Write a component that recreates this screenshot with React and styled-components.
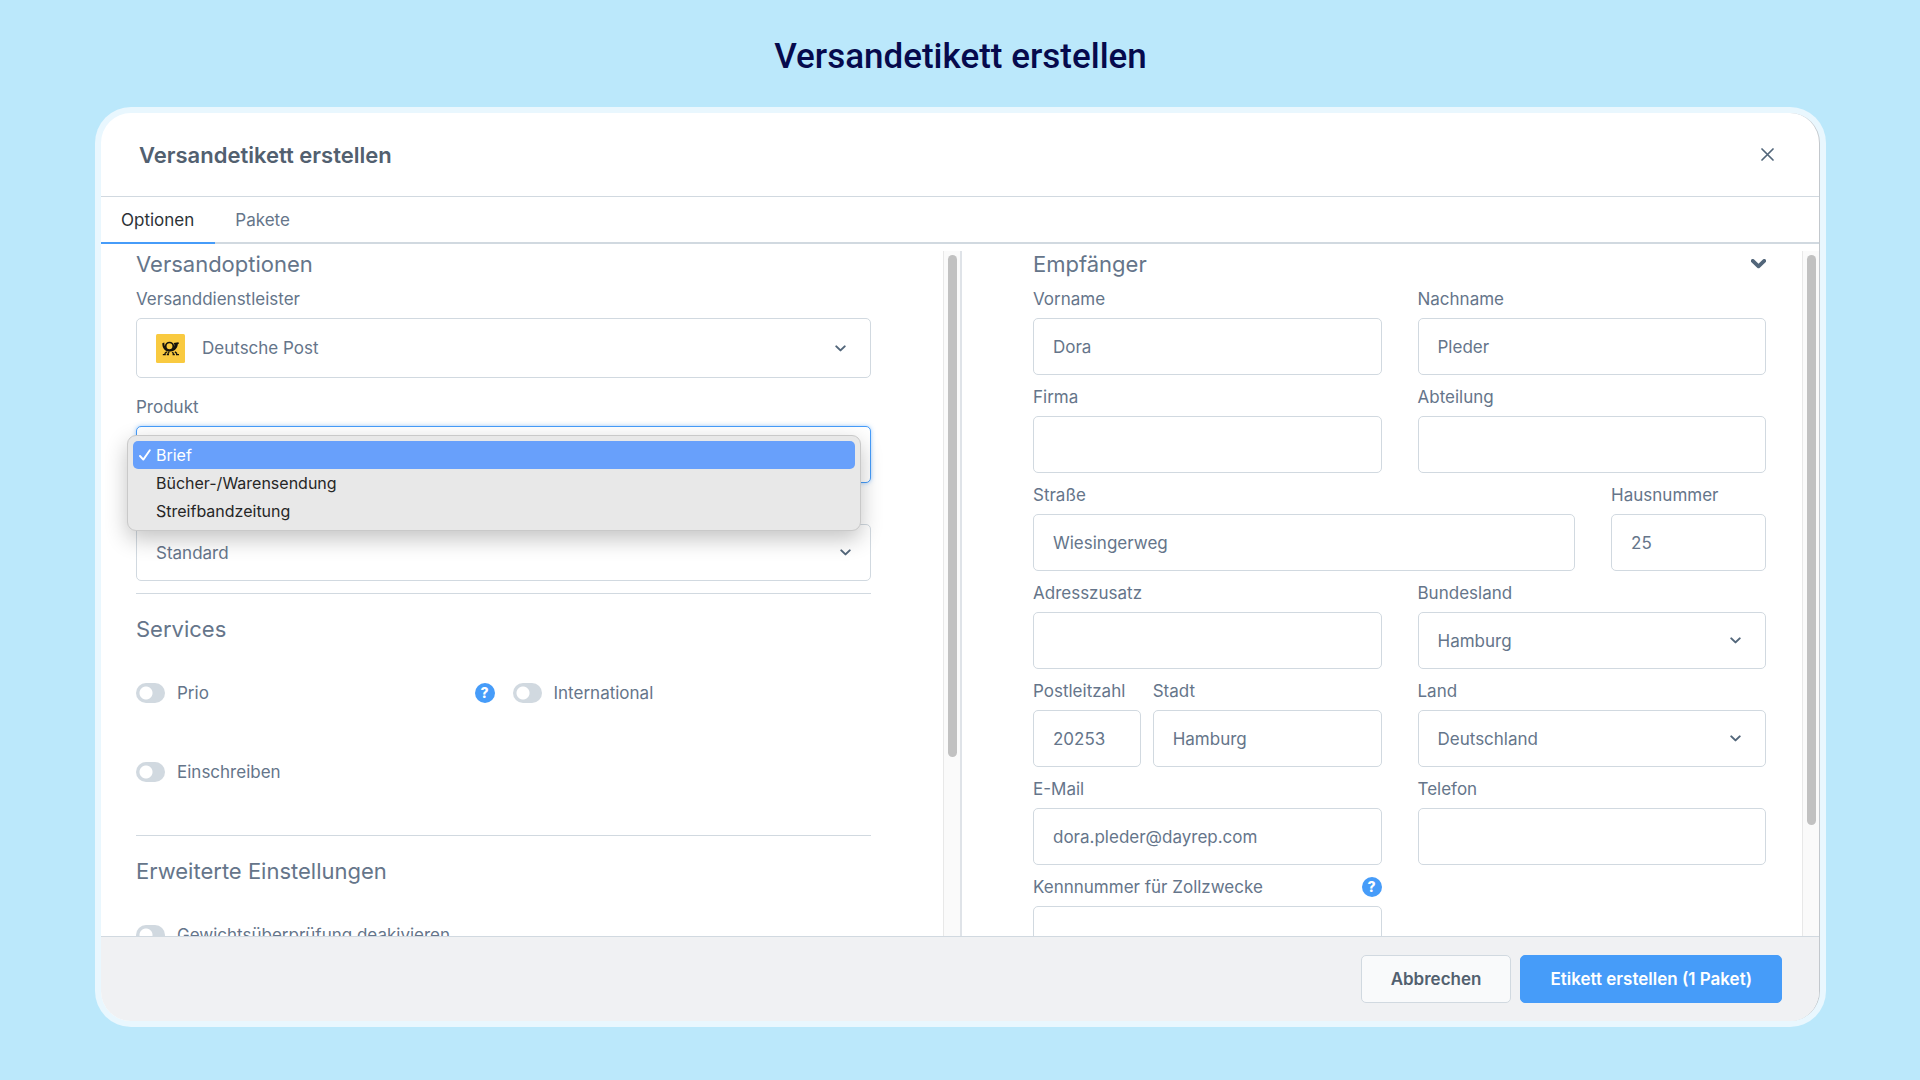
import React from "react";
import styled, { createGlobalStyle, css } from "styled-components";

const color = {
  sky: "#bbe8fb",
  navy: "#060a4d",
  text: "#65758a",
  strong: "#52606f",
  icon: "#52667a",
  line: "#d1d9e0",
  blue: "#469cf9",
};

const GlobalStyle = createGlobalStyle`
  *, *::before, *::after { box-sizing: border-box; }
  body { margin: 0; background: ${color.sky}; }
  button, input, select { font: inherit; color: inherit; }
  h1, h2, h3, ul { margin: 0; padding: 0; }
`;

const Page = styled.div`
  display: flex;
  flex-direction: column;
  height: 100vh;
  padding: 34px 94px 53px 95px;
  font-family: Inter, "Liberation Sans", sans-serif;
  font-size: 17px;
  line-height: 20px;
  color: ${color.text};
`;

const PageTitle = styled.h1`
  margin-bottom: 27px;
  font-family: Roboto, sans-serif;
  font-size: 35px;
  line-height: 46px;
  font-weight: 500;
  text-align: center;
  color: ${color.navy};
`;

const Frame = styled.div`
  display: flex;
  flex: 1;
  min-height: 0;
  padding: 6px;
  border-radius: 36px;
  background: #e9f7fe;
`;

const Dialog = styled.section`
  display: flex;
  flex-direction: column;
  flex: 1;
  min-width: 0;
  overflow: hidden;
  border-right: 1px solid #c3c8cd;
  border-radius: 30px;
  background: #fff;
`;

const DialogHeader = styled.header`
  display: flex;
  align-items: center;
  justify-content: space-between;
  flex: none;
  height: 84px;
  padding: 0 38px;
  border-bottom: 1px solid ${color.line};
`;

const DialogTitle = styled.h2`
  font-size: 22px;
  line-height: 28px;
  font-weight: 600;
  color: ${color.strong};
`;

const CloseButton = styled.button`
  display: grid;
  place-items: center;
  width: 28px;
  height: 28px;
  padding: 0;
  border: 0;
  background: none;
  color: ${color.icon};
`;

const Tabs = styled.div`
  display: flex;
  flex: none;
  height: 47px;
  box-shadow: inset 0 -2px ${color.line};
`;

const Tab = styled.button`
  padding: 0 21px 0 20px;
  border: 0;
  border-bottom: 2px solid ${(p) => (p.$active ? color.blue : "transparent")};
  background: none;
  color: ${(p) => (p.$active ? "#2b3136" : color.text)};
`;

const Body = styled.div`
  display: grid;
  grid-template-columns: 861fr 857fr;
  flex: 1;
  min-height: 0;
  padding-top: 7px;
`;

const Pane = styled.div`
  display: flex;
  min-width: 0;
  min-height: 0;
  overflow: hidden;
  border-right: ${(p) => (p.$divided ? "2px solid #dfe3e8" : "0")};
`;

const PaneContent = styled.div`
  flex: 1;
  min-width: 0;
  padding: ${(p) => (p.$side === "left" ? "0 72px 0 35px" : "0 36px 0 71px")};
`;

const ScrollTrack = styled.div`
  flex: none;
  width: 17px;
  padding: 4px 3px 3px 4px;
  border-left: 1px solid #e8e8e8;
  background: #fafafa;
`;

const ScrollThumb = styled.div`
  height: ${(p) => p.$share}%;
  border-radius: 5px;
  background: #c1c1c1;
`;

const SectionHead = styled.div`
  display: flex;
  align-items: center;
  justify-content: space-between;
  height: 26px;
  margin-bottom: 12px;
`;

const SectionTitle = styled.h3`
  font-size: 22px;
  line-height: 26px;
  font-weight: 400;
`;

const IconButton = styled.button`
  display: flex;
  padding: 0;
  border: 0;
  background: none;
  color: ${color.icon};
`;

const Divider = styled.hr`
  height: 1px;
  margin: ${(p) => p.$above}px 0 22px;
  border: 0;
  background: ${color.line};
`;

const FieldWrap = styled.div`
  display: flex;
  flex-direction: column;
  gap: 9px;
  min-width: 0;
`;

const LabelRow = styled.div`
  display: flex;
  align-items: center;
  justify-content: space-between;
  height: 20px;
  white-space: nowrap;
`;

const boxed = css`
  width: 100%;
  height: 57px;
  padding: 0 19px;
  border: 1px solid ${color.line};
  border-radius: 5px;
  background: #fff;
`;

const TextInput = styled.input`
  ${boxed}
  outline: none;
`;

const SelectBox = styled.div`
  ${boxed}
  display: flex;
  align-items: center;
  height: ${(p) => (p.$tall ? 60 : 57)}px;
  padding-right: ${(p) => p.$end}px;
  ${(p) =>
    p.$focused &&
    css`
      border-color: ${color.blue};
      box-shadow: 0 0 4px rgba(70, 156, 249, 0.5);
    `}
`;

const NativeSelect = styled.select`
  flex: 1;
  min-width: 0;
  height: 100%;
  padding: 0 ${(p) => (p.$indent ? 17 : 0)}px;
  border: 0;
  outline: none;
  appearance: none;
  background: transparent;
`;

const LeftFields = styled.div`
  display: flex;
  flex-direction: column;
`;

const ProductGroup = styled.div`
  position: relative;
  display: flex;
  flex-direction: column;
  gap: 9px;
  margin-top: 19px;
`;

const PackageField = styled.div`
  margin-top: 41px;
`;

const Menu = styled.ul`
  position: absolute;
  top: 38px;
  left: -9px;
  right: 10px;
  padding: 5px;
  border: 1px solid #c9c9c9;
  border-radius: 9px;
  background: #e8e8e8;
  box-shadow: 0 8px 22px rgba(0, 0, 0, 0.24);
  list-style: none;
`;

const MenuItem = styled.li`
  display: flex;
  align-items: center;
  height: 28px;
  padding-left: 6px;
  border-radius: 5px;
  background: ${(p) => (p.$selected ? "#68a0fb" : "transparent")};
  color: ${(p) => (p.$selected ? "#fff" : "#262626")};
  font-size: 16px;
`;

const MenuMark = styled.span`
  display: flex;
  width: 17px;
`;

const Services = styled.div`
  display: grid;
  grid-template-columns: 1fr 1fr;
  gap: 59px 18px;
  margin-top: 41px;
`;

const ServiceItem = styled.div`
  display: flex;
  align-items: center;
  height: 20px;
`;

const SwitchInput = styled.input`
  flex: none;
  width: 29px;
  height: 20px;
  margin: 0 12px 0 0;
  appearance: none;
  border-radius: 10px;
  background: radial-gradient(circle at 10px 10px, #fff 6px, transparent 7px) #d1d9e0;
`;

const HelpButton = styled.button`
  display: grid;
  place-items: center;
  width: 20px;
  height: 20px;
  margin-left: auto;
  padding: 0;
  border: 0;
  border-radius: 50%;
  background: ${color.blue};
  color: #fff;
  font-size: 14px;
  line-height: 20px;
  font-weight: 800;
`;

const FormRows = styled.div`
  display: grid;
  gap: 12px;
`;

const FormRow = styled.div`
  display: grid;
  grid-template-columns: ${(p) => p.$columns || "1fr 1fr"};
  gap: ${(p) => p.$gap || 36}px;
`;

const DialogFooter = styled.footer`
  display: flex;
  align-items: center;
  justify-content: flex-end;
  gap: 9px;
  flex: none;
  height: 85px;
  padding: 0 37px;
  border-top: 1px solid ${color.line};
  background: #f0f1f3;
`;

const ActionButton = styled.button`
  height: 48px;
  padding: 0 29px;
  border: 1px solid ${(p) => (p.$primary ? color.blue : color.line)};
  border-radius: 5px;
  background: ${(p) => (p.$primary ? color.blue : "#f9fafb")};
  color: ${(p) => (p.$primary ? "#fff" : color.strong)};
  font-weight: 600;
`;

const Chevron = ({ width = 11, weight = 2 }) => (
  <svg width={width} height={(width * 7) / 11} viewBox="0 0 11 7" fill="none" aria-hidden="true">
    <path d="M1.3 1.4 5.5 5.4 9.7 1.4" stroke={color.icon} strokeWidth={weight} strokeLinecap="round" strokeLinejoin="round" />
  </svg>
);

const PostLogo = () => (
  <svg width="29" height="29" viewBox="0 0 29 29" fill="none" aria-hidden="true">
    <rect width="29" height="29" rx="1.5" fill="#f9ca40" />
    <path d="M6.300 9.300 8.300 8.600C8.200 12.200 9.600 14.600 12.200 15.800L14 17.600C9 17.800 6.300 14.400 6.300 9.300Z" fill="#15130c" />
    <path d="M12.400 17.600C17 17.800 21.400 15.600 21.800 10.200L23 9.400 22.400 8.300 17.600 8.900 18.300 10.200C18.600 13.600 16.600 15.600 12.400 15.800Z" fill="#15130c" />
    <circle cx="13.500" cy="12.300" r="3.800" fill="#f9ca40" stroke="#15130c" strokeWidth="1.700" />
    <path d="M10.800 17.700 8.600 19.800M19 17.700 21 19.800M13.200 18.200 11.600 19.800M16.200 18.200 17.800 19.800" stroke="#15130c" strokeWidth="1.400" />
    <path d="M6.800 20.600h3M10.800 20.600h2.200M16.600 20.600h2.200M20 20.600h3" stroke="#15130c" strokeWidth="1.400" />
  </svg>
);

const CloseIcon = () => (
  <svg width="13" height="13" viewBox="0 0 13 13" aria-hidden="true">
    <path d="M1 1l11 11M12 1 1 12" stroke="currentColor" strokeWidth="1.700" strokeLinecap="round" />
  </svg>
);

const CheckIcon = () => (
  <svg width="12" height="12" viewBox="0 0 12 12" fill="none" aria-hidden="true">
    <path d="M1 7 4.300 10.600 10.800 1.200" stroke="#fff" strokeWidth="1.900" strokeLinecap="round" strokeLinejoin="round" />
  </svg>
);

const Help = () => <HelpButton type="button" aria-label="Hilfe">?</HelpButton>;

const Field = ({ id, label, value = "", type = "text", help }) => (
  <FieldWrap>
    <LabelRow>
      <label htmlFor={id}>{label}</label>
      {help && <Help />}
    </LabelRow>
    <TextInput id={id} type={type} defaultValue={value} />
  </FieldWrap>
);

const SelectControl = ({ id, options, logo, end = 24, focused, ariaLabel }) => (
  <SelectBox $end={end} $tall={!!logo} $focused={focused}>
    {logo}
    <NativeSelect id={id} $indent={!!logo} aria-label={ariaLabel}>
      {options.map((o) => (
        <option key={o}>{o}</option>
      ))}
    </NativeSelect>
    <Chevron />
  </SelectBox>
);

const SelectField = ({ id, label, ...rest }) => (
  <FieldWrap>
    <LabelRow>
      <label htmlFor={id}>{label}</label>
    </LabelRow>
    <SelectControl id={id} {...rest} />
  </FieldWrap>
);

const Switch = ({ id, label, help }) => (
  <ServiceItem>
    <SwitchInput type="checkbox" role="switch" id={id} />
    <label htmlFor={id}>{label}</label>
    {help && <Help />}
  </ServiceItem>
);

const Scrollbar = ({ share }) => (
  <ScrollTrack aria-hidden="true">
    <ScrollThumb $share={share} />
  </ScrollTrack>
);

const products = ["Brief", "Bücher-/Warensendung", "Streifbandzeitung"];

const ProductMenu = () => (
  <Menu role="listbox" aria-label="Produkt">
    {products.map((name, i) => (
      <MenuItem key={name} role="option" aria-selected={i === 0} $selected={i === 0}>
        <MenuMark>{i === 0 && <CheckIcon />}</MenuMark>
        {name}
      </MenuItem>
    ))}
  </Menu>
);

const ShippingOptions = () => (
  <PaneContent $side="left">
    <SectionHead>
      <SectionTitle>Versandoptionen</SectionTitle>
    </SectionHead>
    <LeftFields>
      <SelectField id="carrier" label="Versanddienstleister" options={["Deutsche Post"]} logo={<PostLogo />} />
      <ProductGroup>
        <SelectField id="product" label="Produkt" options={products} end={19} focused />
        <ProductMenu />
      </ProductGroup>
      <PackageField>
        <SelectControl id="package" ariaLabel="Verpackung" options={["Standard"]} end={19} />
      </PackageField>
    </LeftFields>
    <Divider $above={12} />
    <SectionTitle>Services</SectionTitle>
    <Services>
      <Switch id="prio" label="Prio" help />
      <Switch id="international" label="International" />
      <Switch id="registered" label="Einschreiben" />
    </Services>
    <Divider $above={53} />
    <SectionTitle>Erweiterte Einstellungen</SectionTitle>
    <Services>
      <Switch id="weight" label="Gewichtsüberprüfung deakivieren" />
    </Services>
  </PaneContent>
);

const Recipient = () => (
  <PaneContent $side="right">
    <SectionHead>
      <SectionTitle>Empfänger</SectionTitle>
      <IconButton type="button" aria-label="Einklappen">
        <Chevron width={15} weight={2.8} />
      </IconButton>
    </SectionHead>
    <FormRows>
      <FormRow>
        <Field id="first" label="Vorname" value="Dora" />
        <Field id="last" label="Nachname" value="Pleder" />
      </FormRow>
      <FormRow>
        <Field id="company" label="Firma" />
        <Field id="department" label="Abteilung" />
      </FormRow>
      <FormRow $columns="7fr 2fr">
        <Field id="street" label="Straße" value="Wiesingerweg" />
        <Field id="number" label="Hausnummer" value="25" />
      </FormRow>
      <FormRow>
        <Field id="extra" label="Adresszusatz" />
        <SelectField id="state" label="Bundesland" options={["Hamburg"]} />
      </FormRow>
      <FormRow>
        <FormRow $columns="8fr 17fr" $gap={12}>
          <Field id="zip" label="Postleitzahl" value="20253" />
          <Field id="city" label="Stadt" value="Hamburg" />
        </FormRow>
        <SelectField id="country" label="Land" options={["Deutschland"]} />
      </FormRow>
      <FormRow>
        <Field id="email" label="E-Mail" type="email" value="dora.pleder@dayrep.com" />
        <Field id="phone" label="Telefon" type="tel" />
      </FormRow>
      <FormRow>
        <Field id="customs" label="Kennnummer für Zollzwecke" help />
      </FormRow>
    </FormRows>
  </PaneContent>
);

export default function App() {
  return (
    <Page>
      <GlobalStyle />
      <PageTitle>Versandetikett erstellen</PageTitle>
      <Frame>
        <Dialog role="dialog" aria-labelledby="dialog-title">
          <DialogHeader>
            <DialogTitle id="dialog-title">Versandetikett erstellen</DialogTitle>
            <CloseButton type="button" aria-label="Schließen">
              <CloseIcon />
            </CloseButton>
          </DialogHeader>
          <Tabs role="tablist">
            <Tab type="button" role="tab" aria-selected="true" $active>
              Optionen
            </Tab>
            <Tab type="button" role="tab" aria-selected="false">
              Pakete
            </Tab>
          </Tabs>
          <Body>
            <Pane $divided>
              <ShippingOptions />
              <Scrollbar share={74} />
            </Pane>
            <Pane>
              <Recipient />
              <Scrollbar share={84} />
            </Pane>
          </Body>
          <DialogFooter>
            <ActionButton type="button">Abbrechen</ActionButton>
            <ActionButton type="button" $primary>
              Etikett erstellen (1 Paket)
            </ActionButton>
          </DialogFooter>
        </Dialog>
      </Frame>
    </Page>
  );
}
